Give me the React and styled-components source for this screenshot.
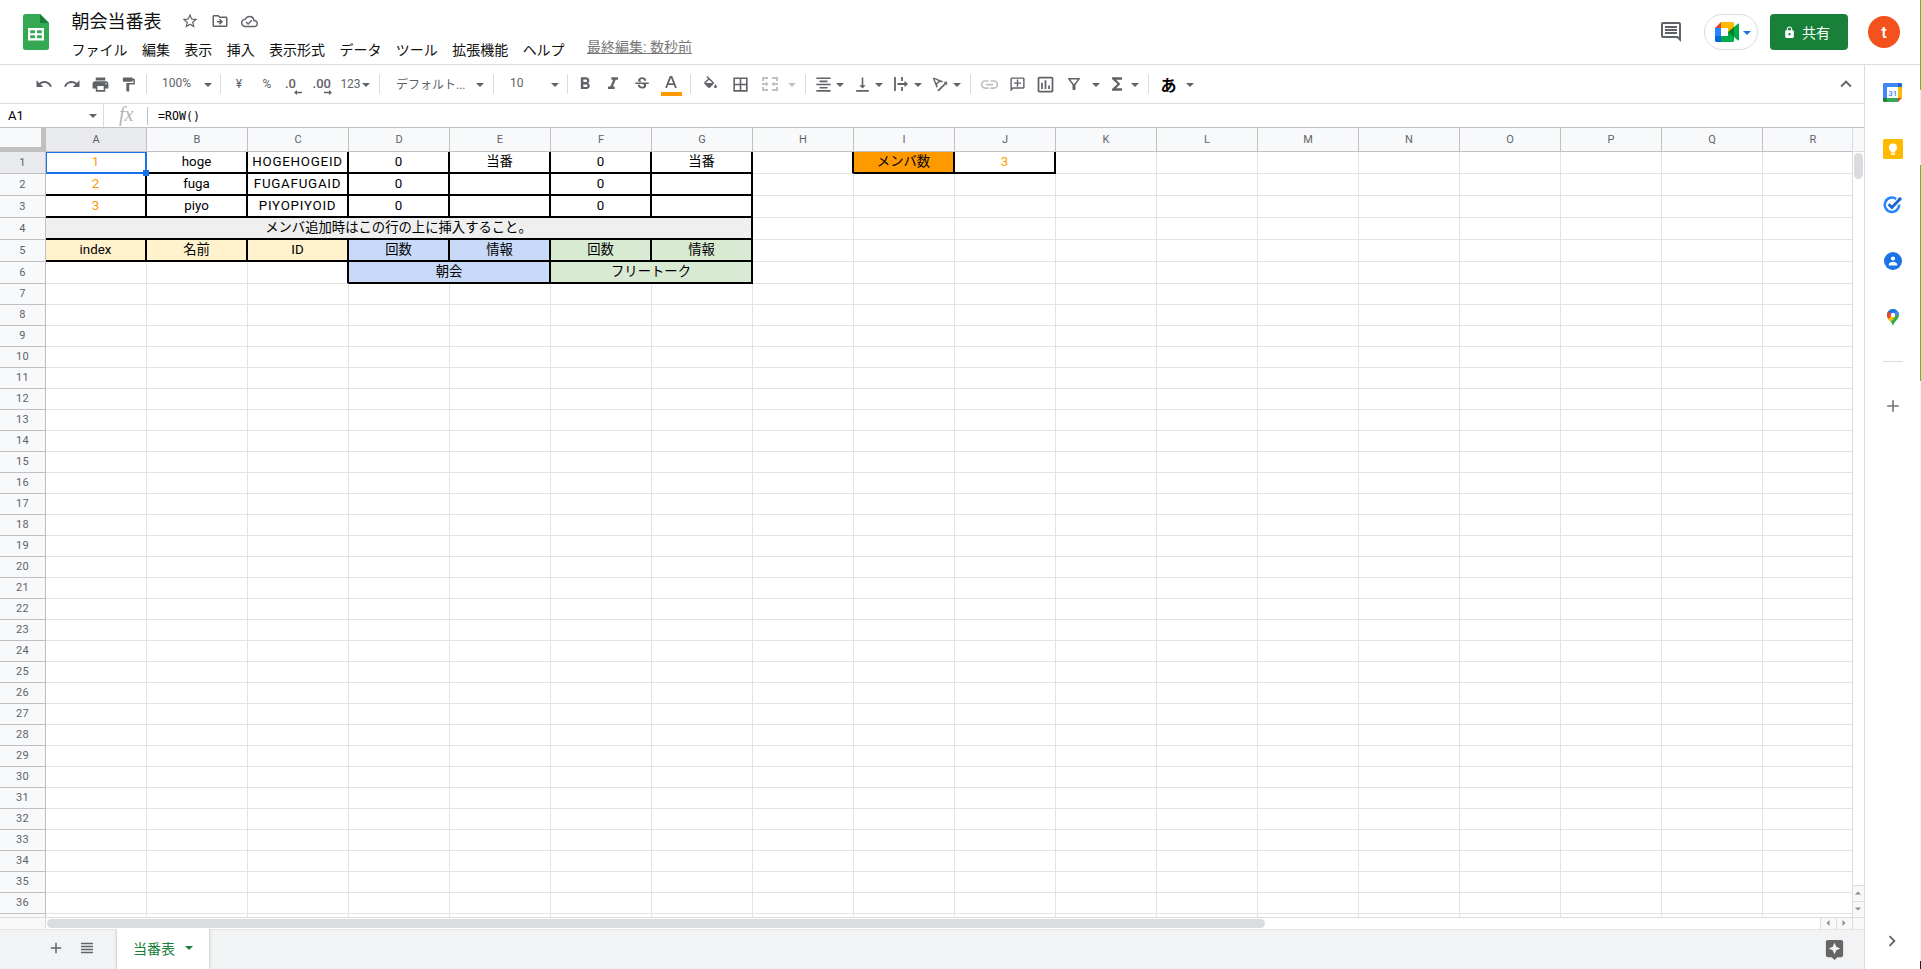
import React from "react";
import styled, { createGlobalStyle, css } from "styled-components";
import {
  MdStarBorder, MdOutlineDriveFileMove, MdOutlineCloudDone, MdUndo, MdRedo, MdPrint, MdFormatPaint,
  MdFormatBold, MdFormatItalic, MdStrikethroughS, MdBorderAll, MdFormatAlignCenter, MdVerticalAlignBottom,
  MdTextRotationAngleup, MdLink, MdOutlineAddComment, MdOutlineInsertChart, MdOutlineFilterAlt, MdFunctions,
  MdOutlineComment, MdKeyboardArrowUp, MdKeyboardArrowRight, MdAdd, MdViewHeadline, MdAssistant, MdLock,
} from "react-icons/md";

const Global = createGlobalStyle`
  * { box-sizing: border-box; }
  body {
    margin: 0;
    overflow: hidden;
    background: #fff;
    font-family: Roboto, "Noto Sans CJK JP", sans-serif;
    color: #000;
  }
  svg { display: block; flex: none; }
`;

const Page = styled.div`
  display: flex;
  width: 1921px;
  height: 969px;
`;
const Workspace = styled.div`
  display: flex;
  flex-direction: column;
  width: 1920px;
`;
const ScreenEdge = styled.div`
  width: 1px;
  display: flex;
  flex-direction: column;
`;
const EdgePart = styled.div`
  height: ${(p) => p.$h}px;
  background: ${(p) => p.$c};
`;

/* header */
const Header = styled.header`
  display: flex;
  height: 65px;
  border-bottom: 1px solid #dadce0;
  padding: 0 20px 0 23px;
`;
const Logo = styled.div`
  padding-top: 14px;
  width: 48.5px;
`;
const Titles = styled.div`
  display: flex;
  flex-direction: column;
  flex: 1;
`;
const TitleRow = styled.div`
  display: flex;
  align-items: center;
  height: 42px;
  color: #5f6368;
`;
const Title = styled.h1`
  margin: 2px 19px 0 0;
  font-size: 18px;
  font-weight: 400;
  color: #111;
  line-height: 24px;
`;
const TitleIcon = styled.span`
  width: 30px;
`;
const MenuRow = styled.nav`
  display: flex;
  gap: 14.4px;
  font-size: 14px;
  line-height: 16px;
  white-space: nowrap;
  color: #111;
`;
const LastEdit = styled.a`
  margin-left: 8px;
  margin-top: -3px;
  color: #777;
  text-decoration: underline;
`;
const HeaderActions = styled.div`
  display: flex;
  align-items: flex-start;
  padding-top: 14px;
`;
const CommentIcon = styled.div`
  color: #5f6368;
  padding-top: 6px;
  width: 45px;
`;
const MeetButton = styled.div`
  width: 54px;
  height: 36px;
  border: 1px solid #dadce0;
  border-radius: 18px;
  display: flex;
  align-items: center;
  padding-left: 10px;
  gap: 4px;
  margin-right: 12px;
`;
const ShareButton = styled.button`
  width: 78px;
  height: 36px;
  border: 0;
  border-radius: 4px;
  background: #188038;
  color: #fff;
  display: flex;
  align-items: center;
  gap: 6px;
  padding: 0 0 0 13px;
  font: 400 14px Roboto, "Noto Sans CJK JP", sans-serif;
  margin-right: 20px;
`;
const Avatar = styled.div`
  width: 32px;
  height: 32px;
  margin-top: 2px;
  border-radius: 50%;
  background: #f4511e;
  color: #fff;
  font-size: 17px;
  font-weight: 500;
  line-height: 32px;
  text-align: center;
`;

/* body */
const Body = styled.div`
  display: flex;
  flex: 1;
  min-height: 0;
`;
const Main = styled.div`
  display: flex;
  flex-direction: column;
  width: 1865px;
  border-right: 1px solid #dadce0;
`;
const Toolbar = styled.div`
  display: flex;
  height: 39px;
  padding-left: 30px;
  border-bottom: 1px solid #dadce0;
  color: #5f6368;
`;
const Slot = styled.div`
  flex: none;
  width: ${(p) => p.$w}px;
  margin-left: ${(p) => p.$ml || 0}px;
  display: flex;
  align-items: center;
  justify-content: center;
  font-size: 12px;
  white-space: nowrap;
  opacity: ${(p) => (p.$off ? 0.4 : 1)};
`;
const TextSlot = styled(Slot)`
  justify-content: flex-start;
  padding-left: ${(p) => p.$pl}px;
  padding-bottom: 2px;
`;
const DecimalSlot = styled(Slot)`
  flex-direction: column;
  align-items: flex-end;
  padding: 4px ${(p) => p.$pr}px 0 0;
  font-size: 13px;
  font-weight: 500;
  line-height: 12px;
`;
const Digits = styled.span`
  margin-right: ${(p) => p.$mr}px;
`;
const InputSlot = styled(Slot)`
  color: #000;
  font-size: 16px;
  font-weight: 700;
`;
const Divider = styled.i`
  width: 1px;
  height: 20px;
  background: #dadce0;
`;
const CaretShape = styled.i`
  width: 0;
  height: 0;
  margin-top: 1px;
  border: 4px solid transparent;
  border-top-color: ${(p) => p.$c || "#5f6368"};
  border-bottom: 0;
`;
const Collapse = styled.div`
  margin-left: auto;
  width: 29px;
  display: flex;
  align-items: center;
`;
const ColorLetter = styled.div`
  display: flex;
  flex-direction: column;
  align-items: center;
  gap: 4px;
  padding-top: 4px;
`;
const ColorBar = styled.i`
  width: 21px;
  height: 4px;
  background: #ff9900;
`;

const FormulaBar = styled.div`
  display: flex;
  align-items: center;
  height: 24px;
  border-bottom: 1px solid #c0c0c0;
`;
const NameBox = styled.div`
  display: flex;
  align-items: center;
  justify-content: space-between;
  width: 104px;
  height: 23px;
  padding: 0 6px 0 8px;
  font-size: 13px;
  border-right: 1px solid #dadce0;
`;
const Fx = styled.div`
  width: 44px;
  height: 18px;
  border-right: 1px solid #c0c0c0;
  color: #b5b5b5;
  font: italic 20px/14px "Liberation Serif", serif;
  padding-left: 15px;
`;
const Formula = styled.div`
  padding-left: 10px;
  font: 11.6px "DejaVu Sans Mono", monospace;
`;

const SheetArea = styled.div`
  display: grid;
  grid-template-columns: 1852px 12px;
  grid-template-rows: 789px 12px;
`;
const Grid = styled.div`
  display: grid;
  grid-template-columns: 46px repeat(18, 101px);
  grid-template-rows: 24px repeat(6, 22px) repeat(31, 21px);
  overflow: hidden;
`;
const Corner = styled.div`
  background: #f8f9fa;
  border: solid #c0c0c0;
  border-width: 0 5px 5px 0;
`;
const HeadCell = styled.div`
  display: flex;
  align-items: center;
  justify-content: center;
  background: ${(p) => (p.$active ? "#e8eaed" : "#f8f9fa")};
  border: solid #c0c0c0;
  border-width: 0 1px 1px 0;
  color: #5f6368;
  font-size: 11px;
  line-height: 13px;
`;
const RowHead = styled(HeadCell)`
  padding-bottom: 1px;
  letter-spacing: 0.2px;
`;
const line = (on) => (on ? "2px solid #000" : "1px solid #e2e3e3");
const Cell = styled.div`
  grid-column: span ${(p) => p.$span || 1};
  position: relative;
  display: flex;
  align-items: center;
  justify-content: center;
  font-size: 13.33px;
  line-height: 18px;
  letter-spacing: ${(p) => (p.$wide ? "0.75px" : "normal")};
  white-space: nowrap;
  color: ${(p) => p.$color || "#000"};
  background: ${(p) => p.$bg || "#fff"};
  border-right: ${(p) => line(p.$r)};
  border-bottom: ${(p) => line(p.$b)};
  padding: 0 ${(p) => (p.$r ? 0 : 1)}px ${(p) => (p.$b ? 1 : 2)}px 0;
  ${(p) =>
    p.$selected &&
    css`
      border: solid #1a73e8;
      border-width: 1px 2px 2px 1px;
    `}
`;
const FillHandle = styled.i`
  position: absolute;
  right: -4px;
  bottom: -4px;
  width: 6px;
  height: 6px;
  background: #1a73e8;
  z-index: 1;
`;

const VScroll = styled.div`
  display: flex;
  flex-direction: column;
  border-left: 1px solid #dadce0;
`;
const VScrollHead = styled.div`
  height: 24px;
  background: #f8f9fa;
  border-bottom: 1px solid #dadce0;
`;
const VThumb = styled.div`
  width: 9px;
  height: 26px;
  margin: 1px;
  border-radius: 5px;
  background: #dadce0;
`;
const ScrollButton = styled.div`
  width: ${(p) => p.$w}px;
  height: ${(p) => p.$h}px;
  background: #f8f8f8;
  border: 0 solid #dadce0;
  border-width: ${(p) => p.$bw};
  padding: 0 1px 1px 0;
  display: flex;
  align-items: center;
  justify-content: center;
`;
const Push = styled.div`
  margin-top: auto;
`;
const HScroll = styled.div`
  grid-column: 1 / 3;
  display: flex;
  border-top: 1px solid #dadce0;
`;
const HScrollHead = styled.div`
  width: 46px;
  background: #f8f8f8;
  border-right: 1px solid #dadce0;
`;
const HThumb = styled.div`
  width: 1218px;
  height: 9px;
  margin: 1px auto 1px 1px;
  border-radius: 5px;
  background: #dadce0;
`;

const TabBar = styled.footer`
  display: flex;
  flex: 1;
  background: #f1f3f4;
  border-top: 1px solid #e3e4e6;
  color: #5f6368;
`;
const TabTools = styled.div`
  display: flex;
  align-items: center;
  gap: 13px;
  padding: 0 0 3px 47px;
  width: 117px;
`;
const Tab = styled.div`
  width: 92px;
  margin-top: -1px;
  background: #fff;
  box-shadow: 0 0 3px rgba(60, 64, 67, 0.35);
  clip-path: inset(0 -4px 0 -4px);
  display: flex;
  align-items: center;
  gap: 10px;
  padding: 0 0 3px 16px;
  color: #188038;
  font-size: 14px;
`;
const Explore = styled.div`
  margin-left: auto;
  padding: 8px 18px 0 0;
  color: #666;
`;

const SidePanel = styled.aside`
  width: 55px;
  display: flex;
  flex-direction: column;
  align-items: center;
  padding: 18px 0 17px;
`;
const SideItem = styled.div`
  height: 56px;
  padding-top: ${(p) => p.$pt || 0}px;
  display: flex;
  align-items: flex-start;
`;
const SideRule = styled.div`
  width: 20px;
  height: 1px;
  background: #dadce0;
  margin: -2px 0 34px;
`;
const SideToggle = styled.div`
  margin: auto 1px 0 0;
  color: #5f6368;
`;

const Caret = ({ w, ml, off }) => (
  <Slot $w={w} $ml={ml} $off={off}><CaretShape /></Slot>
);
const Sep = ({ w }) => <Slot $w={w}><Divider /></Slot>;

const SheetsLogo = () => (
  <svg width="26" height="36" viewBox="0 0 26 36">
    <path d="M2.500 0H17l9 9v24.500a2.500 2.500 0 0 1-2.500 2.500h-21A2.500 2.500 0 0 1 0 33.500v-31A2.500 2.500 0 0 1 2.500 0z" fill="#34a853" />
    <path d="M17 0l9 9h-9z" fill="#188038" />
    <path d="M5 14h16v12.500H5zM7.200 16.200v3h4.700v-3zm6.900 0v3h4.700v-3zm-6.900 5.100v3h4.700v-3zm6.900 0v3h4.700v-3z" fill="#fff" fillRule="evenodd" />
  </svg>
);
const MeetLogo = () => (
  <svg width="24" height="20" viewBox="0 0 24 20">
    <path d="M0 6h6v8H0z" fill="#2684fc" />
    <path d="M0 6l6-6v6z" fill="#ea4335" />
    <path d="M6 0h11.500A1.500 1.500 0 0 1 19 1.500V8l-6 2V6H6z" fill="#ffba00" />
    <path d="M0 14h6v6H1.500A1.500 1.500 0 0 1 0 18.500z" fill="#0066da" />
    <path d="M6 14h7v-4l6-1v9.500a1.500 1.500 0 0 1-1.500 1.500H6z" fill="#00ac47" />
    <path d="M19 5l3.700-3.200c.5-.4 1.300-.1 1.300.5v15.400c0 .6-.8.9-1.300.5L19 15z" fill="#00ac47" />
    <path d="M13 10l6-5v10z" fill="#00832d" />
  </svg>
);
const MergeIcon = () => (
  <svg width="16" height="14" viewBox="0 0 16 14" fill="none" stroke="currentColor" strokeWidth="2">
    <path d="M1 4V1h5M10 1h5v3M1 10v3h5M10 13h5v-3M0 7h5M16 7h-5" />
    <path d="M4 4.500L6.500 7 4 9.500zM12 4.500L9.500 7 12 9.500z" fill="currentColor" stroke="none" />
  </svg>
);
const OverflowIcon = () => (
  <svg width="14" height="14" viewBox="0 0 14 14" fill="none" stroke="currentColor">
    <path d="M1 0v14" strokeWidth="1.800" />
    <path d="M8 0v4M8 10v4M3.500 7H12" strokeWidth="1.800" />
    <path d="M10.500 3.700L14 7l-3.500 3.300z" fill="currentColor" stroke="none" />
  </svg>
);
const FillIcon = () => (
  <svg width="17" height="17" viewBox="0 0 24 24" fill="currentColor">
    <path d="M16.560 8.940L7.620 0 6.210 1.410l2.380 2.380-5.150 5.150a1.490 1.490 0 000 2.120l5.500 5.500c.29.29.68.44 1.060.44s.77-.15 1.060-.44l5.500-5.500c.59-.58.59-1.530 0-2.120zM5.210 10L10 5.210 14.790 10H5.210zM19 11.500s-2 2.170-2 3.500c0 1.100.9 2 2 2s2-.9 2-2c0-1.330-2-3.500-2-3.500z" />
  </svg>
);
const TextColorIcon = () => (
  <svg width="12" height="12" viewBox="0 0 12 12" fill="none" stroke="currentColor" strokeWidth="1.800">
    <path d="M1 12L5.400 1h1.200L11 12M3 8.200h6" />
  </svg>
);
const Arrow = ({ right }) => (
  <svg width="8" height="5" viewBox="0 0 8 5" fill="currentColor">
    <path d={right ? "M8 2.500L5 0v1.700H0v1.600h5V5z" : "M0 2.500L3 0v1.700h5v1.600H3V5z"} />
  </svg>
);
const Tri = ({ d }) => (
  <svg width="6" height="6" viewBox="0 0 6 6" fill="#8a8a8a">
    <path d={d} />
  </svg>
);
const CalendarIcon = () => (
  <svg width="19" height="19" viewBox="0 0 19 19">
    <path d="M0 1.200A1.200 1.200 0 0 1 1.200 0H15v4H4v11H0z" fill="#4285f4" />
    <path d="M15 0h2.800A1.200 1.200 0 0 1 19 1.200V4h-4z" fill="#1967d2" />
    <path d="M15 4h4v11h-4z" fill="#fbbc04" />
    <path d="M4 15h11v4H4z" fill="#34a853" />
    <path d="M0 15h4v4H1.200A1.200 1.200 0 0 1 0 17.800z" fill="#188038" />
    <path d="M15 15h4l-4 4z" fill="#ea4335" />
    <path d="M4 4h11v11H4z" fill="#fff" />
    <text x="9.700" y="12.600" fontSize="8" fontWeight="500" fill="#4285f4" textAnchor="middle">31</text>
  </svg>
);
const KeepIcon = () => (
  <svg width="20" height="20" viewBox="0 0 20 20">
    <rect width="20" height="20" rx="1.500" fill="#ffba00" />
    <circle cx="10" cy="8.500" r="4" fill="#fff" />
    <path d="M8 11h4v2.500H8zM8 14.300h4v1.500H8z" fill="#fff" />
  </svg>
);
const TasksIcon = () => (
  <svg width="20" height="18" viewBox="0 0 20 18" fill="none">
    <path d="M13.200 2.900A7.200 7.200 0 1 0 16.200 8.600" stroke="#2684fc" strokeWidth="2.500" />
    <path d="M5.600 8.300l3.300 3.200L17 3" stroke="#1967d2" strokeWidth="2.900" />
    <circle cx="17" cy="2.900" r="1.700" fill="#0066da" />
  </svg>
);
const ContactsIcon = () => (
  <svg width="18" height="18" viewBox="0 0 18 18">
    <circle cx="9" cy="9" r="9" fill="#1a73e8" />
    <circle cx="9" cy="6.500" r="2.100" fill="#fff" />
    <path d="M4.800 13.400v-.9c0-1.700 2.600-2.700 4.200-2.700s4.200 1 4.200 2.700v.9z" fill="#fff" />
  </svg>
);
const MapsIcon = () => (
  <svg width="12" height="17" viewBox="0 0 12 17">
    <defs>
      <clipPath id="pin">
        <path d="M6 0a6 6 0 0 1 6 6c0 4.500-4.600 5.800-6 11C4.600 11.800 0 10.500 0 6a6 6 0 0 1 6-6z" />
      </clipPath>
    </defs>
    <g clipPath="url(#pin)">
      <path d="M0 0h12v17H0z" fill="#34a853" />
      <path d="M0 4l6 2 5-6H0z" fill="#1a73e8" />
      <path d="M6 6l4-5 2 3v2z" fill="#4285f4" />
      <path d="M0 1.500L6 6l-5 6H0z" fill="#ea4335" />
      <path d="M0 11.500L6 5l2 3-5.500 6.500z" fill="#fbbc04" />
      <circle cx="6" cy="6" r="2.200" fill="#fff" />
    </g>
  </svg>
);

const MENUS = ["ファイル", "編集", "表示", "挿入", "表示形式", "データ", "ツール", "拡張機能", "ヘルプ"];
const COLS = "ABCDEFGHIJKLMNOPQR".split("");
const ORANGE = "#ff9900";
const YELLOW = "#fff2cc";
const BLUE = "#c9daf8";
const GREEN = "#d9ead3";
const box = { r: true, b: true };

const CELLS = {
  A1: { t: "1", color: ORANGE, selected: true },
  A2: { ...box, t: "2", color: ORANGE },
  A3: { ...box, t: "3", color: ORANGE },
  B1: { ...box, t: "hoge" },
  B2: { ...box, t: "fuga" },
  B3: { ...box, t: "piyo" },
  C1: { ...box, t: "HOGEHOGEID", wide: true },
  C2: { ...box, t: "FUGAFUGAID", wide: true },
  C3: { ...box, t: "PIYOPIYOID", wide: true },
  D1: { ...box, t: "0" }, D2: { ...box, t: "0" }, D3: { ...box, t: "0" },
  E1: { ...box, t: "当番" }, E2: box, E3: box,
  F1: { ...box, t: "0" }, F2: { ...box, t: "0" }, F3: { ...box, t: "0" },
  G1: { ...box, t: "当番" }, G2: box, G3: box,
  H1: { r: true },
  I1: { ...box, t: "メンバ数", bg: ORANGE },
  J1: { ...box, t: "3", color: ORANGE },
  A4: { ...box, t: "メンバ追加時はこの行の上に挿入すること。", bg: "#efefef", span: 7 },
  A5: { ...box, t: "index", bg: YELLOW },
  B5: { ...box, t: "名前", bg: YELLOW },
  C5: { ...box, t: "ID", bg: YELLOW },
  D5: { ...box, t: "回数", bg: BLUE },
  E5: { ...box, t: "情報", bg: BLUE },
  F5: { ...box, t: "回数", bg: GREEN },
  G5: { ...box, t: "情報", bg: GREEN },
  C6: { r: true },
  D6: { ...box, t: "朝会", bg: BLUE, span: 2 },
  F6: { ...box, t: "フリートーク", bg: GREEN, span: 2 },
};

function Row({ n }) {
  const out = [];
  for (let i = 0; i < COLS.length; ) {
    const c = CELLS[COLS[i] + n] || {};
    out.push(
      <Cell key={i} $span={c.span} $color={c.color} $bg={c.bg} $r={c.r} $b={c.b} $wide={c.wide} $selected={c.selected}>
        {c.t}
        {c.selected && <FillHandle />}
      </Cell>
    );
    i += c.span || 1;
  }
  return (
    <>
      <RowHead $active={n === 1}>{n < 37 ? n : ""}</RowHead>
      {out}
    </>
  );
}

export default function App() {
  return (
    <Page>
      <Global />
      <Workspace>
        <Header>
          <Logo><SheetsLogo /></Logo>
          <Titles>
            <TitleRow>
              <Title>朝会当番表</Title>
              <TitleIcon><MdStarBorder size={18} /></TitleIcon>
              <TitleIcon><MdOutlineDriveFileMove size={18} /></TitleIcon>
              <TitleIcon><MdOutlineCloudDone size={17} /></TitleIcon>
            </TitleRow>
            <MenuRow>
              {MENUS.map((m) => <span key={m}>{m}</span>)}
              <LastEdit>最終編集: 数秒前</LastEdit>
            </MenuRow>
          </Titles>
          <HeaderActions>
            <CommentIcon><MdOutlineComment size={24} /></CommentIcon>
            <MeetButton><MeetLogo /><CaretShape $c="#1a73e8" /></MeetButton>
            <ShareButton><MdLock size={13} />共有</ShareButton>
            <Avatar>t</Avatar>
          </HeaderActions>
        </Header>
        <Body>
          <Main>
            <Toolbar>
              <Slot $w={28}><MdUndo size={18} /></Slot>
              <Slot $w={28}><MdRedo size={18} /></Slot>
              <Slot $w={28}><MdPrint size={19} /></Slot>
              <Slot $w={29}><MdFormatPaint size={17} /></Slot>
              <Sep w={7} />
              <TextSlot $w={52} $pl={12}>100%</TextSlot>
              <Caret w={11} />
              <Sep w={14} />
              <Slot $w={24}>¥</Slot>
              <Slot $w={32}>%</Slot>
              <DecimalSlot $w={23} $pr={4}><Digits $mr={6}>.0</Digits><Arrow /></DecimalSlot>
              <DecimalSlot $w={34} $pr={8}><Digits $mr={1}>.00</Digits><Arrow right /></DecimalSlot>
              <Slot $w={21}>123</Slot>
              <Caret w={9} />
              <Sep w={19} />
              <TextSlot $w={84} $pl={7}>デフォルト...</TextSlot>
              <Caret w={14} />
              <Sep w={13} />
              <TextSlot $w={47} $pl={10}>10</TextSlot>
              <Caret w={16} />
              <Sep w={9} />
              <Slot $w={26}><MdFormatBold size={20} /></Slot>
              <Slot $w={28} $ml={1}><MdFormatItalic size={20} /></Slot>
              <Slot $w={28} $ml={1}><MdStrikethroughS size={18} /></Slot>
              <Slot $w={30}><ColorLetter><TextColorIcon /><ColorBar /></ColorLetter></Slot>
              <Sep w={9} />
              <Slot $w={30}><FillIcon /></Slot>
              <Slot $w={30}><MdBorderAll size={19} /></Slot>
              <Slot $w={30} $off><MergeIcon /></Slot>
              <Caret w={14} off />
              <Sep w={13} />
              <Slot $w={22}><MdFormatAlignCenter size={19} /></Slot>
              <Caret w={12} />
              <Slot $w={24} $ml={4}><MdVerticalAlignBottom size={19} /></Slot>
              <Caret w={10} />
              <Slot $w={26} $ml={4}><OverflowIcon /></Slot>
              <Caret w={8} />
              <Slot $w={24} $ml={6}><MdTextRotationAngleup size={20} /></Slot>
              <Caret w={10} />
              <Sep w={17} />
              <Slot $w={20} $off><MdLink size={21} /></Slot>
              <Slot $w={24} $ml={6}><MdOutlineAddComment size={17} style={{ transform: "scaleX(-1)" }} /></Slot>
              <Slot $w={24} $ml={4}><MdOutlineInsertChart size={21} /></Slot>
              <Slot $w={24} $ml={5}><MdOutlineFilterAlt size={18} /></Slot>
              <Caret w={14} ml={3} />
              <Slot $w={24} $ml={2}><MdFunctions size={20} /></Slot>
              <Caret w={10} ml={1} />
              <Sep w={17} />
              <InputSlot $w={23}>あ</InputSlot>
              <Caret w={14} ml={3} />
              <Collapse><MdKeyboardArrowUp size={22} /></Collapse>
            </Toolbar>
            <FormulaBar>
              <NameBox>A1<CaretShape /></NameBox>
              <Fx>fx</Fx>
              <Formula>=ROW()</Formula>
            </FormulaBar>
            <SheetArea>
              <Grid>
                <Corner />
                {COLS.map((c) => <HeadCell key={c} $active={c === "A"}>{c}</HeadCell>)}
                {Array.from({ length: 37 }, (_, i) => <Row key={i} n={i + 1} />)}
              </Grid>
              <VScroll>
                <VScrollHead />
                <VThumb />
                <Push />
                <ScrollButton $w={11} $h={16} $bw="1px 0 0 0"><Tri d="M0 4.500L3 1.500l3 3z" /></ScrollButton>
                <ScrollButton $w={11} $h={16} $bw="1px 0 0 0"><Tri d="M0 1.500h6l-3 3z" /></ScrollButton>
              </VScroll>
              <HScroll>
                <HScrollHead />
                <HThumb />
                <ScrollButton $w={16} $h={11} $bw="0 0 0 1px"><Tri d="M4.500 0v6l-3-3z" /></ScrollButton>
                <ScrollButton $w={16} $h={11} $bw="0 0 0 1px"><Tri d="M1.500 0v6l3-3z" /></ScrollButton>
                <ScrollButton $w={12} $h={11} $bw="0 0 0 1px" />
              </HScroll>
            </SheetArea>
            <TabBar>
              <TabTools><MdAdd size={18} /><MdViewHeadline size={18} /></TabTools>
              <Tab>当番表<CaretShape $c="#188038" /></Tab>
              <Explore><MdAssistant size={23} /></Explore>
            </TabBar>
          </Main>
          <SidePanel>
            <SideItem><CalendarIcon /></SideItem>
            <SideItem><KeepIcon /></SideItem>
            <SideItem $pt={1}><TasksIcon /></SideItem>
            <SideItem $pt={1}><ContactsIcon /></SideItem>
            <SideItem $pt={2}><MapsIcon /></SideItem>
            <SideRule />
            <MdAdd size={20} color="#777" />
            <SideToggle><MdKeyboardArrowRight size={22} /></SideToggle>
          </SidePanel>
        </Body>
      </Workspace>
      <ScreenEdge>
        <EdgePart $h={90} $c="#5bc500" />
        <EdgePart $h={75} $c="#f1f1f1" />
        <EdgePart $h={216} $c="#5bc500" />
        <EdgePart $h={580} $c="#f5f5f5" />
        <EdgePart $h={8} $c="#202124" />
      </ScreenEdge>
    </Page>
  );
}
